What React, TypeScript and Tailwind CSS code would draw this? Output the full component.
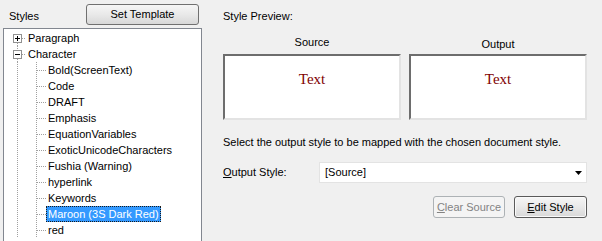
const children = [
  'Bold(ScreenText)',
  'Code',
  'DRAFT',
  'Emphasis',
  'EquationVariables',
  'ExoticUnicodeCharacters',
  'Fushia (Warning)',
  'hyperlink',
  'Keywords',
  'Maroon (3S Dark Red)',
  'red',
];

const dot = { stroke: '#a0a0a0', strokeDasharray: '1 1', shapeRendering: 'crispEdges' as const };

function Expander({ open, first }: { open: boolean; first?: boolean }) {
  return (
    <svg width="22" height="16" className="shrink-0">
      {!first && <line x1="13.5" y1="0" x2="13.5" y2="4" {...dot} />}
      <line x1="13.5" y1="13" x2="13.5" y2="16" {...dot} />
      <line x1="18" y1="8.5" x2="23" y2="8.5" {...dot} />
      <rect x="9.5" y="4.5" width="8" height="8" fill="#ffffff" stroke="#919191" shapeRendering="crispEdges" />
      <line x1="11" y1="8.5" x2="16" y2="8.5" stroke="#000" shapeRendering="crispEdges" />
      {!open && <line x1="13.5" y1="6" x2="13.5" y2="11" stroke="#000" shapeRendering="crispEdges" />}
    </svg>
  );
}

function Branch() {
  return (
    <svg width="42" height="16" className="shrink-0">
      <line x1="13.5" y1="0" x2="13.5" y2="16" {...dot} />
      <line x1="32.5" y1="0" x2="32.5" y2="16" {...dot} />
      <line x1="33" y1="8.5" x2="42" y2="8.5" {...dot} />
    </svg>
  );
}

function Preview({ label, lower }: { label: string; lower?: boolean }) {
  return (
    <div className="flex flex-col w-[178px]">
      <div className={`h-[20px] text-center ${lower ? 'pt-[2px]' : ''}`}>{label}</div>
      <div className="h-[66px] bg-white border-t-2 border-l-2 border-t-[#6d6d6d] border-l-[#6d6d6d] border-b-2 border-r-2 border-b-[#e3e3e3] border-r-[#e3e3e3] pt-[15px] text-center">
        <span className="text-[15px] leading-[17px] text-[#800000]" style={{ fontFamily: '"Liberation Serif", serif' }}>
          Text
        </span>
      </div>
    </div>
  );
}

export default function App() {
  return (
    <div
      className="w-[602px] h-[241px] overflow-hidden bg-[#f0f0f0] flex text-[11px] text-black"
      style={{ fontFamily: '"Liberation Sans", Arial, sans-serif' }}
    >
      {/* Left: style tree */}
      <div className="w-[202px] pl-[3px] flex flex-col shrink-0">
        <div className="h-[28px] flex items-start">
          <span className="ml-[6px] mt-[8px]">Styles</span>
          <button className="ml-auto mr-[3px] mt-[4px] w-[113px] h-[21px] rounded-[3px] border border-[#707070] bg-gradient-to-b from-[#f6f6f6] via-[#e9e9e9] to-[#d8d8d8]">
            Set Template
          </button>
        </div>
        <div className="flex-1 bg-white border-t border-l border-r border-[#828790] pt-[1px]">
          <div className="flex items-center h-4">
            <Expander open={false} first />
            <span className="px-[2px] leading-4">Paragraph</span>
          </div>
          <div className="flex items-center h-4">
            <Expander open />
            <span className="px-[2px] leading-4">Character</span>
          </div>
          {children.map((name) => (
            <div key={name} className="flex items-center h-4">
              <Branch />
              {name.startsWith('Maroon') ? (
                <span className="px-[2px] h-4 leading-4 bg-[#3399ff] text-white outline outline-1 outline-dotted outline-[#1a1a1a] -outline-offset-1">
                  {name}
                </span>
              ) : (
                <span className="px-[2px] leading-4">{name}</span>
              )}
            </div>
          ))}
        </div>
      </div>

      {/* Right: preview and mapping */}
      <div className="flex-1 pl-[21px] pr-[17px] flex flex-col">
        <div className="mt-[8px] h-[16px]">Style Preview:</div>
        <div className="mt-[10px] flex gap-[8px]">
          <Preview label="Source" />
          <Preview label="Output" lower />
        </div>
        <div className="mt-[14px] h-[16px]">Select the output style to be mapped with the chosen document style.</div>
        <div className="mt-[12px] flex items-center">
          <span className="w-[96px]">
            <span className="underline">O</span>utput Style:
          </span>
          <div className="flex-1 h-[21px] bg-white border border-[#e3e3e3] flex items-center pl-[5px] pr-[4px]">
            <span className="flex-1">[Source]</span>
            <svg width="7" height="4" viewBox="0 0 7 4">
              <path d="M0 0H7L3.5 4Z" fill="#000" />
            </svg>
          </div>
        </div>
        <div className="mt-[13px] flex justify-end gap-[9px]">
          <button className="w-[72px] h-[22px] rounded-[3px] border border-[#adb2b5] bg-[#f4f4f4] text-[#838383]">
            <span className="underline">C</span>lear Source
          </button>
          <button className="w-[73px] h-[22px] rounded-[3px] border border-[#5a5a5a] shadow-[inset_0_0_0_1px_#fafafa] bg-gradient-to-b from-[#f6f6f6] via-[#e9e9e9] to-[#d8d8d8]">
            <span className="underline">E</span>dit Style
          </button>
        </div>
      </div>
    </div>
  );
}
